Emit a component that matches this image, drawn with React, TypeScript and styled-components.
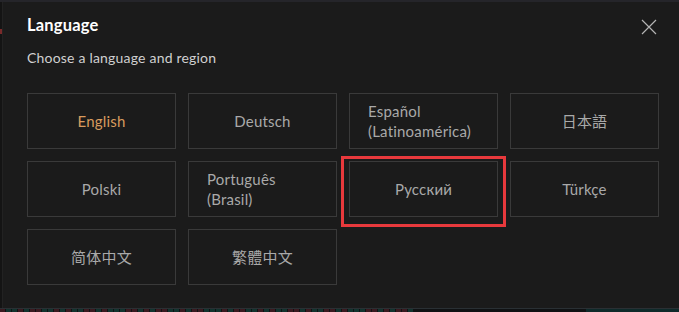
import React from "react";
import styled, { createGlobalStyle } from "styled-components";

const GlobalStyle = createGlobalStyle`
  html, body {
    margin: 0;
    padding: 0;
    background: #141414;
    overflow: hidden;
  }
  * { box-sizing: border-box; }
`;

type Lang = { label: string; active?: boolean; highlight?: boolean };

const languages: Lang[] = [
  { label: "English", active: true },
  { label: "Deutsch" },
  { label: "Español (Latinoamérica)" },
  { label: "日本語" },
  { label: "Polski" },
  { label: "Português (Brasil)" },
  { label: "Русский", highlight: true },
  { label: "Türkçe" },
  { label: "简体中文" },
  { label: "繁體中文" },
];

// pattern for the chart strip peeking out under the modal
const bars = "rggrgrrggrgrggrrgrgggrrgrgrrggrgrrgggrgrrggrgrggrrgrggrrgrgggrrgrgrrg";

const App = () => {
  return (
    <>
      <GlobalStyle />
      <Page>
        <Edge>
          <EdgeMark />
        </Edge>
        <Modal>
          <Header>
            <Title>Language</Title>
            <CloseBtn aria-label="Close">
              <svg width="16" height="16" viewBox="0 0 16 16">
                <path d="M1 1 L15 15 M15 1 L1 15" stroke="#b4b4b4" strokeWidth="1.2" fill="none" />
              </svg>
            </CloseBtn>
          </Header>
          <Subtitle>Choose a language and region</Subtitle>
          <Grid>
            {languages.map((l) => (
              <Cell key={l.label} $active={l.active}>
                <Label>{l.label}</Label>
                {l.highlight && <Highlight />}
              </Cell>
            ))}
          </Grid>
        </Modal>
        <Strip>
          <Bars>
            {bars.split("").map((c, i) => (
              <Bar key={i} $up={c === "g"} />
            ))}
          </Bars>
          <PriceTag>100,500.7</PriceTag>
        </Strip>
      </Page>
    </>
  );
};

const Page = styled.div`
  position: relative;
  width: 679px;
  height: 312px;
  border-top: 2px solid #25252a;
  display: grid;
  grid-template-columns: 3px 1fr;
  grid-template-rows: 306px 4px;
  font-family: "Lato", "Noto Sans CJK SC", sans-serif;
`;

const Edge = styled.div`
  position: relative;
  background: #141414;
  border-right: 1px solid #222;
`;

const EdgeMark = styled.div`
  position: absolute;
  top: 27px;
  left: 0;
  width: 2px;
  height: 5px;
  background: #7a2a2a;
`;

const Modal = styled.div`
  background: #1b1b1b;
  padding: 13px 20px 0 24px;
  display: flex;
  flex-direction: column;
`;

const Header = styled.div`
  display: flex;
  justify-content: space-between;
  align-items: center;
  height: 20px;
`;

const Title = styled.h2`
  margin: 0;
  color: #ffffff;
  font-size: 16.5px;
  font-weight: 700;
  letter-spacing: 0.2px;
`;

const CloseBtn = styled.button`
  background: none;
  border: none;
  padding: 0;
  width: 16px;
  height: 16px;
  margin-right: 2px;
  margin-top: 3px;
  cursor: pointer;
  display: flex;
`;

const Subtitle = styled.p`
  margin: 15px 0 0;
  color: #d0d0d0;
  font-size: 14px;
  line-height: 16px;
  letter-spacing: 0.2px;
`;

const Grid = styled.div`
  display: grid;
  grid-template-columns: repeat(4, 149px);
  grid-auto-rows: 56px;
  column-gap: 12px;
  row-gap: 12px;
  margin-top: 27px;
`;

const Cell = styled.button<{ $active?: boolean }>`
  position: relative;
  background: #1b1b1b;
  border: 1px solid #3a3a3a;
  border-radius: 0;
  padding: 0 18px;
  display: flex;
  align-items: center;
  justify-content: center;
  text-align: left;
  font-family: inherit;
  font-size: 15px;
  line-height: 20px;
  letter-spacing: 0.2px;
  color: ${(p) => (p.$active ? "#d89b5e" : "#a9a9a9")};
  cursor: pointer;
`;

const Label = styled.span`
  display: block;
`;

const Highlight = styled.span`
  position: absolute;
  left: -9px;
  right: -9px;
  top: -6px;
  bottom: -11px;
  border: 3px solid #e8393c;
  pointer-events: none;
`;

const Strip = styled.div`
  grid-column: 1 / 3;
  position: relative;
  background: #101214;
  border-top: 1px solid #2a3034;
  display: flex;
  overflow: hidden;
`;

const Bars = styled.div`
  display: flex;
  gap: 1px;
  width: 456px;
  overflow: hidden;
`;

const Bar = styled.span<{ $up: boolean }>`
  flex: 0 0 5px;
  height: 100%;
  background: ${(p) => (p.$up ? "#12332e" : "#3a1a20")};
`;

const PriceTag = styled.div`
  position: absolute;
  left: 586px;
  top: 0;
  width: 93px;
  height: 14px;
  background: #0f2a2a;
  color: #2aa58e;
  font-size: 12px;
  line-height: 14px;
  padding-left: 16px;
`;

export default App;
